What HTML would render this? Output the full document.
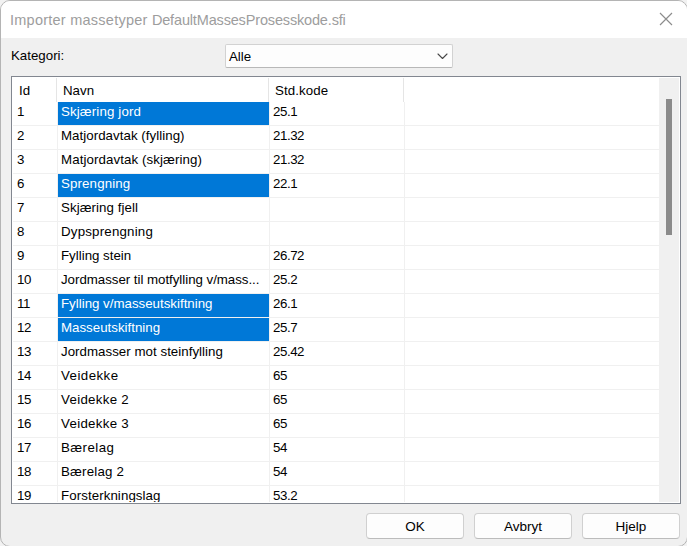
<!DOCTYPE html>
<html>
<head>
<meta charset="utf-8">
<title>Importer massetyper</title>
<style>
html,body{margin:0;padding:0;}
body{width:687px;height:546px;overflow:hidden;background:#f2f2f2;font-family:"Liberation Sans",sans-serif;position:relative;}
#win{position:absolute;left:0;top:0;width:686px;height:545px;border:1px solid #b4b4b4;border-radius:10px;background:#f0f0f0;overflow:hidden;}
#tbar{position:absolute;left:0;top:0;width:686px;height:37px;background:#ffffff;}
#title{position:absolute;left:9px;top:9px;font-size:14.5px;line-height:20px;color:#9d9d9d;white-space:nowrap;letter-spacing:0px;}
#close{position:absolute;left:658px;top:11px;width:14px;height:14px;}
.lbl{position:absolute;font-size:13.3px;line-height:16px;color:#000;white-space:nowrap;}
#combo{position:absolute;left:224px;top:43px;width:226px;height:22px;border:1px solid #d2d2d2;border-bottom-color:#b8b8b8;border-radius:2px;background:#fdfdfd;}
#list{position:absolute;left:10px;top:75px;width:668px;height:426px;border:1px solid #828790;background:#fff;overflow:hidden;}
#inner{position:absolute;left:1px;top:1px;width:666px;height:424px;overflow:hidden;background:#fff;}
.hl{position:absolute;left:0;width:646px;height:1px;background:#f0f0f0;}
.vl{position:absolute;top:24px;width:1px;height:400px;background:#f0f0f0;}
.hs{position:absolute;top:0px;width:1px;height:24px;background:#e5e5e5;}
.sel{position:absolute;left:45px;width:211px;height:23px;background:#0078d7;}
.t{position:absolute;font-size:13.3px;line-height:16px;color:#000;white-space:nowrap;}
.w{color:#fff;}
.n{letter-spacing:-0.45px;}
#track{position:absolute;left:646px;top:0;width:20px;height:424px;background:#f0f0f0;}
#thumb{position:absolute;left:7px;top:21px;width:6px;height:136px;background:#8b8b8b;}
.btn{position:absolute;top:512px;width:96px;height:24px;border:1px solid #d0d0d0;border-bottom-color:#bcbcbc;border-radius:4px;background:#fdfdfd;font-size:13.5px;line-height:26px;text-align:center;color:#000;}
</style>
</head>
<body>
<div id="win">
  <div id="tbar">
    <div id="title"><span style="letter-spacing:0.245px">Importer massetyper </span><span style="letter-spacing:-0.16px">DefaultMassesProsesskode.sfi</span></div>
    <svg id="close" viewBox="0 0 14 14"><path d="M1 1 L13 13 M13 1 L1 13" stroke="#8c8c8c" stroke-width="1.15" fill="none"/></svg>
  </div>
  <div class="lbl" style="left:10px;top:47px;">Kategori:</div>
  <div id="combo">
    <div class="lbl" style="left:3px;top:4px;">Alle</div>
    <svg style="position:absolute;left:211px;top:8px;width:11px;height:7px" viewBox="0 0 11 7"><path d="M1 1 L5.5 5.5 L10 1" stroke="#484848" stroke-width="1.1" stroke-linecap="round" stroke-linejoin="round" fill="none"/></svg>
  </div>
  <div id="list"><div id="inner">
    <div id="rows">
<div class="hs" style="left:43px"></div><div class="hs" style="left:255px"></div><div class="hs" style="left:390px"></div>
<div class="vl" style="left:44px"></div><div class="vl" style="left:256px"></div><div class="vl" style="left:391px"></div>
<div class="t" style="left:6px;top:5px">Id</div><div class="t" style="left:50px;top:5px">Navn</div><div class="t" style="left:262px;top:5px;letter-spacing:0.1px">Std.kode</div>
<div class="sel" style="top:24px"></div>
<div class="hl" style="top:47px"></div>
<div class="t n" style="left:4px;top:26px">1</div>
<div class="t w" style="left:48px;top:26px;letter-spacing:0.13px">Skjæring jord</div>
<div class="t n" style="left:260px;top:26px">25.1</div>
<div class="hl" style="top:71px"></div>
<div class="t n" style="left:4px;top:50px">2</div>
<div class="t" style="left:48px;top:50px;letter-spacing:0.04px">Matjordavtak (fylling)</div>
<div class="t n" style="left:260px;top:50px">21.32</div>
<div class="hl" style="top:95px"></div>
<div class="t n" style="left:4px;top:74px">3</div>
<div class="t" style="left:48px;top:74px;letter-spacing:0.09px">Matjordavtak (skjæring)</div>
<div class="t n" style="left:260px;top:74px">21.32</div>
<div class="sel" style="top:96px"></div>
<div class="hl" style="top:119px"></div>
<div class="t n" style="left:4px;top:98px">6</div>
<div class="t w" style="left:48px;top:98px;letter-spacing:0.13px">Sprengning</div>
<div class="t n" style="left:260px;top:98px">22.1</div>
<div class="hl" style="top:143px"></div>
<div class="t n" style="left:4px;top:122px">7</div>
<div class="t" style="left:48px;top:122px;letter-spacing:0.06px">Skjæring fjell</div>
<div class="hl" style="top:167px"></div>
<div class="t n" style="left:4px;top:146px">8</div>
<div class="t" style="left:48px;top:146px;letter-spacing:0.2px">Dypsprengning</div>
<div class="hl" style="top:191px"></div>
<div class="t n" style="left:4px;top:170px">9</div>
<div class="t" style="left:48px;top:170px">Fylling stein</div>
<div class="t n" style="left:260px;top:170px">26.72</div>
<div class="hl" style="top:215px"></div>
<div class="t n" style="left:4px;top:194px">10</div>
<div class="t" style="left:48px;top:194px;letter-spacing:-0.03px">Jordmasser til motfylling v/mass...</div>
<div class="t n" style="left:260px;top:194px">25.2</div>
<div class="sel" style="top:216px"></div>
<div class="hl" style="top:239px"></div>
<div class="t n" style="left:4px;top:218px">11</div>
<div class="t w" style="left:48px;top:218px">Fylling v/masseutskiftning</div>
<div class="t n" style="left:260px;top:218px">26.1</div>
<div class="sel" style="top:240px"></div>
<div class="hl" style="top:263px"></div>
<div class="t n" style="left:4px;top:242px">12</div>
<div class="t w" style="left:48px;top:242px">Masseutskiftning</div>
<div class="t n" style="left:260px;top:242px">25.7</div>
<div class="hl" style="top:287px"></div>
<div class="t n" style="left:4px;top:266px">13</div>
<div class="t" style="left:48px;top:266px;letter-spacing:0.03px">Jordmasser mot steinfylling</div>
<div class="t n" style="left:260px;top:266px">25.42</div>
<div class="hl" style="top:311px"></div>
<div class="t n" style="left:4px;top:290px">14</div>
<div class="t" style="left:48px;top:290px;letter-spacing:0.44px">Veidekke</div>
<div class="t n" style="left:260px;top:290px">65</div>
<div class="hl" style="top:335px"></div>
<div class="t n" style="left:4px;top:314px">15</div>
<div class="t" style="left:48px;top:314px;letter-spacing:0.3px">Veidekke 2</div>
<div class="t n" style="left:260px;top:314px">65</div>
<div class="hl" style="top:359px"></div>
<div class="t n" style="left:4px;top:338px">16</div>
<div class="t" style="left:48px;top:338px;letter-spacing:0.3px">Veidekke 3</div>
<div class="t n" style="left:260px;top:338px">65</div>
<div class="hl" style="top:383px"></div>
<div class="t n" style="left:4px;top:362px">17</div>
<div class="t" style="left:48px;top:362px;letter-spacing:0.44px">Bærelag</div>
<div class="t n" style="left:260px;top:362px">54</div>
<div class="hl" style="top:407px"></div>
<div class="t n" style="left:4px;top:386px">18</div>
<div class="t" style="left:48px;top:386px;letter-spacing:0.2px">Bærelag 2</div>
<div class="t n" style="left:260px;top:386px">54</div>
<div class="hl" style="top:431px"></div>
<div class="t n" style="left:4px;top:410px">19</div>
<div class="t" style="left:48px;top:410px;letter-spacing:0.08px">Forsterkningslag</div>
<div class="t n" style="left:260px;top:410px">53.2</div>
</div><!--/rows-->
    <div id="track"><div id="thumb"></div></div>
  </div></div>
  <div class="btn" style="left:365px;">OK</div>
  <div class="btn" style="left:473px;">Avbryt</div>
  <div class="btn" style="left:581px;">Hjelp</div>
</div>
</body>
</html>
